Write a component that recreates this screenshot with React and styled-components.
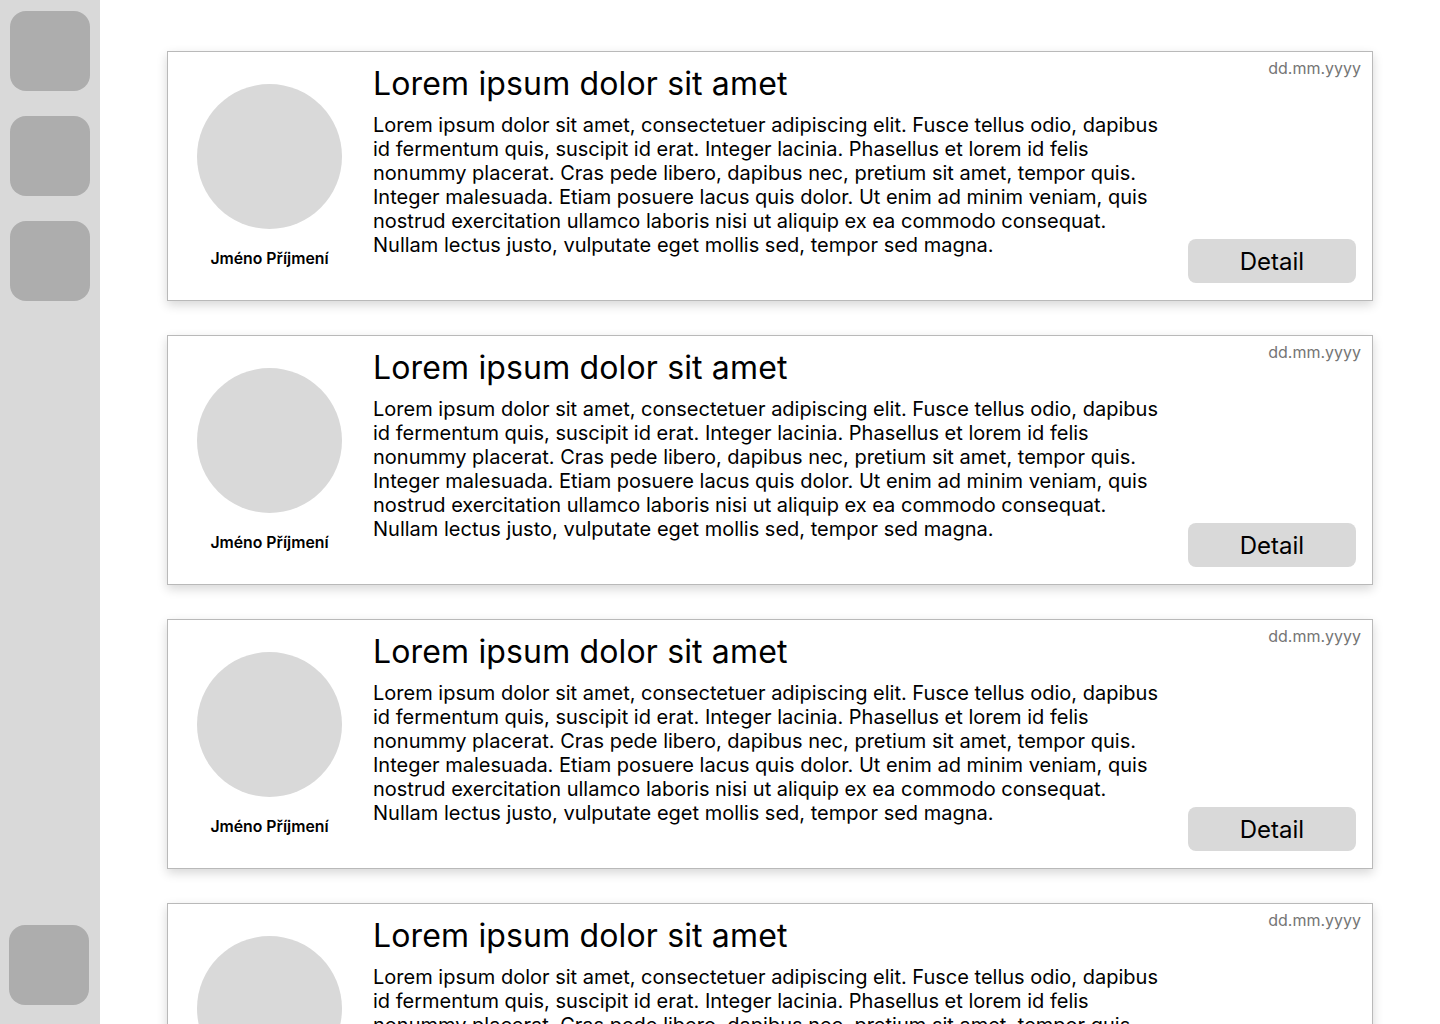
import React from 'react'
import styled, { createGlobalStyle } from 'styled-components'

const GlobalStyle = createGlobalStyle`
    body {
        margin: 0;
        font-family: Inter, "Noto Sans", sans-serif;
        background: #fff;
        color: #000;
    }
`

const Page = styled.div`
    display: flex;
    height: 100vh;
    overflow: hidden;
`

const Sidebar = styled.nav`
    flex: 0 0 100px;
    background: #d9d9d9;
    display: flex;
    flex-direction: column;
    justify-content: space-between;
    padding: 11px 0 19px;
    box-sizing: border-box;
`

const NavGroup = styled.div`
    display: flex;
    flex-direction: column;
    gap: 25px;
    padding-left: ${(p) => p.$left || 10}px;
`

const NavButton = styled.div`
    width: 80px;
    height: 80px;
    border-radius: 16px;
    background: #adadad;
`

const Main = styled.main`
    flex: 1;
    padding: 51px 67px 0;
    display: flex;
    flex-direction: column;
    gap: 34px;
`

const Card = styled.article`
    flex-shrink: 0;
    display: flex;
    height: 250px;
    box-sizing: border-box;
    border: 1px solid #b9b9b9;
    background: #fff;
    box-shadow: 0 4px 10px rgba(0, 0, 0, 0.16);
`

const Author = styled.div`
    flex: 0 0 203px;
    display: flex;
    flex-direction: column;
    align-items: center;
    padding-top: 32px;
`

const Avatar = styled.div`
    width: 145px;
    height: 145px;
    border-radius: 50%;
    background: #d9d9d9;
`

const Name = styled.div`
    margin-top: 20px;
    font-size: 15.8px;
    font-weight: 600;
    line-height: 19px;
`

const Body = styled.div`
    width: 792px;
    padding: 12px 0 0 2px;
`

const Title = styled.h2`
    margin: 0 0 10px;
    font-size: 32px;
    font-weight: 400;
    line-height: 39px;
    letter-spacing: 0.15px;
`

const Text = styled.p`
    margin: 0;
    font-size: 20px;
    line-height: 24px;
`

const Side = styled.div`
    flex: 1;
    display: flex;
    flex-direction: column;
    align-items: flex-end;
    justify-content: space-between;
    padding: 6px 11px 17px 0;
`

const Date = styled.div`
    font-size: 16px;
    line-height: 20px;
    color: #757575;
`

const DetailButton = styled.button`
    width: 168px;
    height: 44px;
    margin-right: 5px;
    border: none;
    border-radius: 8px;
    background: #d9d9d9;
    font-family: inherit;
    font-size: 24px;
    color: #000;
    cursor: pointer;
`

const lorem = 'Lorem ipsum dolor sit amet, consectetuer adipiscing elit. Fusce tellus odio, dapibus id fermentum quis, suscipit id erat. Integer lacinia. Phasellus et lorem id felis nonummy placerat. Cras pede libero, dapibus nec, pretium sit amet, tempor quis. Integer malesuada. Etiam posuere lacus quis dolor. Ut enim ad minim veniam, quis nostrud exercitation ullamco laboris nisi ut aliquip ex ea commodo consequat. Nullam lectus justo, vulputate eget mollis sed, tempor sed magna.'

const posts = [1, 2, 3, 4]

export default function App() {
    return (
        <>
            <GlobalStyle />
            <Page>
                <Sidebar>
                    <NavGroup>
                        <NavButton />
                        <NavButton />
                        <NavButton />
                    </NavGroup>
                    <NavGroup $left={9}>
                        <NavButton />
                    </NavGroup>
                </Sidebar>
                <Main>
                    {posts.map((id) => (
                        <Card key={id}>
                            <Author>
                                <Avatar />
                                <Name>Jméno Příjmení</Name>
                            </Author>
                            <Body>
                                <Title>Lorem ipsum dolor sit amet</Title>
                                <Text>{lorem}</Text>
                            </Body>
                            <Side>
                                <Date>dd.mm.yyyy</Date>
                                <DetailButton>Detail</DetailButton>
                            </Side>
                        </Card>
                    ))}
                </Main>
            </Page>
        </>
    )
}
